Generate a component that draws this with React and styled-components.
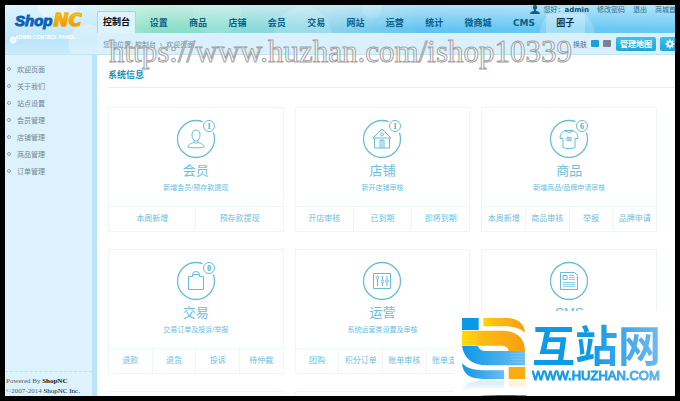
import React from 'react';
import styled, { createGlobalStyle } from 'styled-components';

const GlobalStyle = createGlobalStyle`
    * {
        box-sizing: border-box;
    }

    body {
        margin: 0;
        background: #000;
        font-family: 'Liberation Sans', 'Noto Sans CJK SC', sans-serif;
        font-size: 7px;
        color: #6d8794;
    }

    a {
        color: inherit;
        text-decoration: none;
    }
`;

const Frame = styled.div`
    height: 100vh;
    padding: 5px;
    background: #000;
`;

const Window = styled.div`
    position: relative;
    display: grid;
    grid-template-columns: 92px minmax(0, 1fr);
    grid-template-rows: auto minmax(0, 1fr);
    height: 100%;
    overflow: hidden;
    background: #fff;
`;

const Brand = styled.div`
    padding: 4px 0 0 10px;
    border-bottom: 1px solid #c3e4f2;
    background:
        radial-gradient(circle at 8px 35px, #eef9ff 0 3px, transparent 4px),
        radial-gradient(circle at 52px -4px, rgba(255, 255, 255, 0.3) 0 20px, transparent 21px),
        radial-gradient(circle at 84px 40px, rgba(255, 255, 255, 0.3) 0 20px, transparent 21px),
        linear-gradient(#dcf3fd, #bde5fa 75%, #cbebfb);
`;

const Logo = styled.div`
    display: flex;
    align-items: baseline;
    height: 22px;
    line-height: 22px;
    font-weight: bold;
    font-style: italic;
`;

const LogoShop = styled.span`
    color: #0b62b8;
    font-size: 15px;
    -webkit-text-stroke: 1px #0b62b8;
`;

const LogoNC = styled.span`
    padding: 0 2px 0 1px;
    font-family: 'DejaVu Sans', sans-serif;
    font-size: 18px;
    color: transparent;
    background: linear-gradient(#ffc20e 25%, #f08a00 85%);
    background-clip: text;
    -webkit-text-stroke: 1px #f9a608;
`;

const Tagline = styled.div`
    color: #fff;
    font-size: 5px;
    font-weight: bold;
    line-height: 12px;
    white-space: nowrap;
`;

const Header = styled.header`
    min-width: 0;
    background:
        radial-gradient(circle at 470px 30px, rgba(255, 255, 255, 0.2) 0 27px, transparent 28px),
        radial-gradient(circle at 275px 4px, rgba(255, 255, 255, 0.15) 0 9px, transparent 10px),
        radial-gradient(circle at 206px 30px, rgba(255, 255, 255, 0.15) 0 28px, transparent 29px),
        radial-gradient(circle at 120px 6px, rgba(255, 255, 255, 0.1) 0 24px, transparent 25px),
        linear-gradient(rgba(255, 255, 255, 0.5), rgba(255, 255, 255, 0) 24px),
        linear-gradient(90deg, #b9e9ec, #8ce0c4 10%, #8adbd5 24%, #8dd4ec 40%, #63c4f1 56%, #6bcaf4);
`;

const UserBar = styled.div`
    display: flex;
    justify-content: flex-end;
    height: 9px;
    margin-right: -8px;
    line-height: 9px;
    white-space: nowrap;
    color: #2e6a8c;
`;

const UserIcon = styled.svg`
    width: 10px;
    height: 9px;
    margin-right: 4px;
`;

const UserLink = styled.a`
    margin-left: 8px;
`;

const UserName = styled.strong`
    font-family: 'DejaVu Sans', sans-serif;
    color: #0d4f78;
`;

const Nav = styled.nav`
    display: flex;
    align-items: flex-end;
    max-width: 488px;
    height: 19px;
    font-size: 9px;
    font-weight: bold;
    line-height: 19px;
    text-align: center;
    white-space: nowrap;
`;

const ActiveTab = styled.a`
    height: 22px;
    margin-right: 3px;
    padding: 1px 5px 0;
    border: 1px solid #a5d5e2;
    border-bottom: 0;
    border-radius: 2px 2px 0 0;
    background: #dff3fb;
    color: #000;
`;

const NavItem = styled.a`
    flex: 1 1 auto;
    color: ${(props) => (props.$hover ? '#0a3352' : '#0b5f8a')};
    background: ${(props) => (props.$hover ? 'rgba(255, 255, 255, 0.25)' : 'none')};
    font-family: ${(props) => (props.$latin ? "'DejaVu Sans', sans-serif" : 'inherit')};
`;

const ToolBar = styled.div`
    display: flex;
    align-items: center;
    height: 22px;
    padding-left: 6px;
    border-bottom: 1px solid #c3e4f2;
    background: #daf1fd;
    overflow: hidden;
    white-space: nowrap;
`;

const Crumbs = styled.div`
    flex: 1;
    color: #6f929f;
`;

const SkinPicker = styled.fieldset`
    display: flex;
    align-items: center;
    gap: 4px;
    margin: 0 5px 0 0;
    padding: 0;
    border: 0;
    color: #3f7690;
`;

const SkinSwatch = styled.input`
    appearance: none;
    width: 8px;
    height: 7px;
    margin: 0;
    border-radius: 1px;
    background: ${(props) => props.$color};
`;

const ToolButton = styled.button`
    display: flex;
    align-items: center;
    justify-content: center;
    flex: none;
    width: ${(props) => (props.$icon ? '19px' : '40px')};
    height: 14px;
    margin-right: ${(props) => (props.$icon ? '-4px' : '4px')};
    padding: 0;
    border: 0;
    border-radius: 2px;
    background: linear-gradient(#3fc1ea, #1ea5d8);
    color: #fff;
    font-family: inherit;
    font-size: 8px;
    font-weight: bold;
`;

const Sidebar = styled.aside`
    display: flex;
    flex-direction: column;
    justify-content: space-between;
    border-right: 5px solid #bce4f8;
    background: #dcf2fd;
`;

const Menu = styled.ul`
    margin: 0;
    padding: 5px 0 0 2px;
    list-style: none;
`;

const MenuItem = styled.li`
    display: flex;
    align-items: center;
    gap: 6px;
    height: 17px;
`;

const Bullet = styled.svg`
    width: 4px;
    height: 4px;
    fill: none;
    stroke: #8aa3af;
`;

const Copyright = styled.footer`
    padding: 4px 0 0 1px;
    border-top: 1px dashed #c4dde8;
    font-family: 'Liberation Serif', serif;
    font-size: 7px;
    line-height: 10px;
    white-space: nowrap;
    color: #4c5a60;
`;

const CopyrightLink = styled.a`
    color: #111;
    font-weight: ${(props) => (props.$bold ? 'bold' : 'normal')};
`;

const Main = styled.main`
    min-width: 0;
    padding-left: 11px;
    overflow: hidden;
`;

const SectionTitle = styled.h1`
    margin: 0;
    padding: 10px 0 2px;
    border-bottom: 1px solid #e0f1f3;
    color: #1594b4;
    font-size: 9px;
    line-height: 20px;
`;

const Cards = styled.div`
    display: grid;
    grid-template-columns: repeat(3, minmax(0, 1fr));
    gap: 17px 11px;
    margin: 19px 18px 0 0;
`;

const Card = styled.section`
    min-height: 125px;
    border: 1px solid #edf7fa;
    color: #6bbedb;
    text-align: center;
`;

const CardBody = styled.div`
    padding: 11px 0;
`;

const CardIcon = styled.svg`
    display: block;
    width: 40px;
    height: 40px;
    margin: 0 auto 2px;
    overflow: visible;
    fill: none;
    stroke: #68bcd9;
`;

const BadgeText = styled.text`
    fill: #4aaed2;
    stroke: none;
    font-family: 'Liberation Serif', serif;
    font-size: 8px;
    font-weight: bold;
    text-anchor: middle;
`;

const CardTitle = styled.h2`
    margin: 0;
    font-size: 13px;
    font-weight: normal;
    line-height: 20px;
`;

const CardNote = styled.p`
    margin: 0;
    line-height: 14px;
`;

const CardActions = styled.div`
    display: flex;
    border-top: 1px solid #edf7fa;
    font-size: 8px;
    line-height: 24px;
`;

const CardAction = styled.a`
    flex: 1 1 0;
    white-space: nowrap;

    & + & {
        border-left: 1px solid #edf7fa;
    }
`;

const SiteMark = styled.div`
    position: absolute;
    top: 33px;
    left: 104px;
    color: rgba(255, 255, 255, 0.6);
    font-family: 'Liberation Serif', serif;
    font-size: 31px;
    line-height: 28px;
    white-space: nowrap;
    -webkit-text-stroke: 1px #a3a3a3;
    pointer-events: none;
`;

const Stamp = styled.div`
    position: absolute;
    right: 0;
    bottom: 0;
    display: flex;
    gap: 5px;
    width: 221px;
    height: 85px;
    padding: 7px 0 0 8px;
    background: #fff;
    overflow: hidden;
`;

const StampLogo = styled.svg`
    flex: none;
    width: 65px;
    height: 78px;
`;

const StampName = styled.div`
    font-family: 'Noto Sans CJK SC', sans-serif;
    font-size: 43px;
    font-weight: bold;
    line-height: 51px;
    color: transparent;
    background: linear-gradient(90deg, #0d9ae6 45%, #74b9f2);
    background-clip: text;
`;

const StampUrl = styled.div`
    font-size: 13px;
    line-height: 14px;
    color: transparent;
    background: linear-gradient(90deg, #0d9ae6 45%, #74b9f2);
    background-clip: text;
    -webkit-text-stroke: 1px rgba(60, 165, 234, 0.2);
`;

const navItems = ['设置', '商品', '店铺', '会员', '交易', '网站', '运营', '统计', '微商城', 'CMS', '圈子'];

const menuItems = ['欢迎页面', '关于我们', '站点设置', '会员管理', '店铺管理', '商品管理', '订单管理'];

const cards = [
    {
        title: '会员',
        note: '新增会员/预存款提现',
        badge: 1,
        actions: ['本周新增', '预存款提现'],
        icon: (
            <path d="M20 11c-3 0-4 2-4 5 0 3 2 6 4 6s4-3 4-6c0-3-1-5-4-5zM18 21v2c-1 2-6 1-6 5 0 1 16 1 16 0 0-4-5-3-6-5v-2M18 23q2 3 4 0" />
        ),
    },
    {
        title: '店铺',
        note: '新开店铺审核',
        badge: 1,
        actions: ['开店审核', '已到期', '即将到期'],
        icon: (
            <>
                <path d="M11 19l9-9 9 9zM12.500 19v10h15V19M18 29v-8h4v8M20 21v8" />
                <circle cx="20" cy="15.500" r="1.500" />
            </>
        ),
    },
    {
        title: '商品',
        note: '新增商品/品牌申请审核',
        badge: 6,
        actions: ['本周新增', '商品审核', '举报', '品牌申请'],
        icon: (
            <>
                <path d="M16 11.500h8c3 1 5 4 5 8h-3v9c-3 1.500-9 1.500-12 0v-9h-3c0-4 2-7 5-8zM16 12q4 3 8 0" />
                <path d="M18 18.500h2v3h-2zM20 19l2-1v4l-2-1" />
            </>
        ),
    },
    {
        title: '交易',
        note: '交易订单及投诉/举报',
        badge: 0,
        actions: ['退款', '退货', '投诉', '待仲裁'],
        icon: <path d="M12.500 28.500v-13h4l1-2h5l1 2h4v13zM16.500 15.500v-2q0-3 3.500-3t3.500 3v2" />,
    },
    {
        title: '运营',
        note: '系统运营类设置及审核',
        actions: ['团购', '积分订单', '账单审核', '账单支付'],
        icon: (
            <>
                <path d="M11.500 12.500h17v15h-17zM15.500 18v7M20.500 15v4M20.500 22v3M25 15v3M25 22v3" />
                <circle cx="15.500" cy="16.500" r="1.300" />
                <circle cx="20.500" cy="20.500" r="1.300" />
                <circle cx="25" cy="20" r="1.300" />
            </>
        ),
    },
    {
        title: 'CMS',
        note: '资讯文章/图片画报/会员评论',
        actions: ['文章审核', '画报审核', '评论管理'],
        icon: (
            <>
                <path d="M11.500 11.500h14l3 3v14h-17zM14 14.500h4v4h-4z" />
                <path strokeWidth="0.700" d="M20 14.500h5M20 16.500h6M20 18.500h6M14 21.500h12M14 23.500h12M14 25.500h12" />
            </>
        ),
    },
];

function InfoCard(props) {
    const { title, note, badge, actions, icon } = props;

    return (
        <Card>
            <CardBody>
                <CardIcon viewBox="0 0 40 40" aria-hidden="true">
                    <circle cx="20" cy="20" r="18.500" strokeWidth="1.300" />
                    {icon}
                    {badge !== undefined ? (
                        <>
                            <circle cx="33" cy="7" r="8" fill="#fff" stroke="none" />
                            <circle cx="33" cy="7" r="5.500" />
                            <BadgeText x="33" y="10">{badge}</BadgeText>
                        </>
                    ) : null}
                </CardIcon>
                <CardTitle>{title}</CardTitle>
                <CardNote>{note}</CardNote>
            </CardBody>
            <CardActions>
                {actions.map((action) => <CardAction href="#" key={action}>{action}</CardAction>)}
            </CardActions>
        </Card>
    );
}

function TopBar() {
    return (
        <Header>
            <UserBar>
                <UserIcon viewBox="0 0 10 9" fill="#175a86" aria-hidden="true">
                    <path d="M5 0C3.500 0 2.800 1 2.800 2.300c0 1.200.600 2 1.200 2.500v.900C3 6.300.300 6.300 0 9h10C9.700 6.300 7 6.300 6 5.700v-.900c.600-.500 1.200-1.300 1.200-2.500C7.200 1 6.500 0 5 0z" />
                </UserIcon>
                <span>您好：<UserName>admin</UserName></span>
                <UserLink href="#">修改密码</UserLink>
                <UserLink href="#">退出</UserLink>
                <UserLink href="#">商城首页</UserLink>
            </UserBar>
            <Nav>
                <ActiveTab href="#">控制台</ActiveTab>
                {navItems.map((item) => (
                    <NavItem href="#" key={item} $hover={item === '圈子'} $latin={item === 'CMS'}>{item}</NavItem>
                ))}
            </Nav>
            <ToolBar>
                <Crumbs>您的位置: 控制台 &nbsp;›&nbsp; 欢迎页面</Crumbs>
                <SkinPicker>
                    <span>换肤</span>
                    <SkinSwatch type="radio" name="skin" aria-label="blue" $color="#1a9fd9" defaultChecked />
                    <SkinSwatch type="radio" name="skin" aria-label="grey" $color="#807f92" />
                </SkinPicker>
                <ToolButton type="button">管理地图</ToolButton>
                <ToolButton type="button" aria-label="settings" $icon>
                    <svg width="10" height="10" viewBox="0 0 10 10" fill="none" stroke="#fff" aria-hidden="true">
                        <circle cx="5" cy="5" r="2.300" strokeWidth="1.800" />
                        <path strokeWidth="1.500" d="M5 .500v1.500M5 8v1.500M.500 5h1.500M8 5h1.500M1.800 1.800l1 1M7.200 7.200l1 1M8.200 1.800l-1 1M2.800 7.200l-1 1" />
                    </svg>
                </ToolButton>
            </ToolBar>
        </Header>
    );
}

function HuzhanStamp() {
    return (
        <Stamp>
            <StampLogo viewBox="0 0 195 234" aria-hidden="true">
                <defs>
                    <linearGradient id="gold">
                        <stop offset="0" stopColor="#ffd800" />
                        <stop offset="0.350" stopColor="#fdb813" />
                        <stop offset="1" stopColor="#f6a010" />
                    </linearGradient>
                    <linearGradient id="sky">
                        <stop offset="0" stopColor="#0d98e6" />
                        <stop offset="1" stopColor="#6cbcf3" />
                    </linearGradient>
                    <linearGradient id="fade" x2="0" y2="1">
                        <stop offset="0" stopColor="#d3ebf9" />
                        <stop offset="1" stopColor="#fff" />
                    </linearGradient>
                </defs>
                <path fill="#0d98e6" d="M0 0h50v36H0z" />
                <path fill="url(#gold)" d="M64 0h66c34 0 56 14 59 44-12-12-30-18-55-19H64z" />
                <path fill="url(#sky)" d="M0 84h48c4 12 12 15 26 15h115v43H74C32 142 6 122 0 84z" />
                <path fill="url(#gold)" d="M0 38h120c42 0 69 20 69 61h-49c-2-12-8-16-24-16H0z" />
                <path stroke="#ffe873" d="M0 48h45M0 58h45M0 68h45M0 78h45" />
                <path stroke="#a9d8f8" d="M145 106h44M145 115h44M145 124h44M145 133h44" />
                <path fill="url(#sky)" d="M0 136c18 18 40 21 70 21h56v26H70C32 183 4 176 0 136z" />
                <path fill="#f9ab12" d="M140 147h49v36h-49z" />
                <path fill="url(#fade)" d="M0 222c4-28 30-34 70-34h56v22H70c-30 0-52 2-70 12z" />
                <path fill="#fef3de" d="M140 188h49v18h-49z" />
                <path fill="#1b6f9c" d="M52 234c40-4 120-4 160 0z" />
            </StampLogo>
            <div>
                <StampName>互站网</StampName>
                <StampUrl>WWW.HUZHAN.COM</StampUrl>
            </div>
        </Stamp>
    );
}

export default function App() {
    return (
        <Frame>
            <GlobalStyle />
            <Window>
                <Brand>
                    <Logo>
                        <LogoShop>Shop</LogoShop>
                        <LogoNC>NC</LogoNC>
                    </Logo>
                    <Tagline>ADMIN CONTROL PANEL</Tagline>
                </Brand>
                <TopBar />
                <Sidebar>
                    <Menu>
                        {menuItems.map((item) => (
                            <MenuItem key={item}>
                                <Bullet viewBox="0 0 4 4" aria-hidden="true">
                                    <circle cx="2" cy="2" r="1.500" />
                                </Bullet>
                                <a href="#">{item}</a>
                            </MenuItem>
                        ))}
                    </Menu>
                    <Copyright>
                        Powered By <CopyrightLink href="#" $bold>ShopNC</CopyrightLink>
                        <br />
                        ©2007-2014 <CopyrightLink href="#">ShopNC Inc.</CopyrightLink>
                    </Copyright>
                </Sidebar>
                <Main>
                    <SectionTitle>系统信息</SectionTitle>
                    <Cards>
                        {cards.map((card) => <InfoCard {...card} key={card.title} />)}
                        <Card />
                        <Card />
                    </Cards>
                </Main>
                <SiteMark>https://www.huzhan.com/ishop10339</SiteMark>
                <HuzhanStamp />
            </Window>
        </Frame>
    );
}
